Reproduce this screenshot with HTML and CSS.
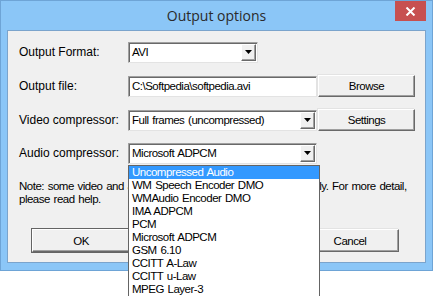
FILE: index.html
```html
<!DOCTYPE html>
<html lang="en">
<head>
    <meta charset="UTF-8">
    <title>Output options</title>
    <link rel="stylesheet" href="styles.css">
</head>
<body>
    <div class="window">
        <div class="titlebar">
            <span class="title">Output options</span>
            <span class="close">
                <svg width="11" height="9" viewBox="0 0 11 9"><path d="M1.5 0.5 L9.5 8.5 M9.5 0.5 L1.5 8.5" stroke="#fff" stroke-width="2"/></svg>
            </span>
        </div>
        <div class="client">
            <div class="row">
                <label>Output Format:</label>
                <div class="combo short"><span class="value">AVI</span><span class="arrow"></span></div>
            </div>
            <div class="row">
                <label>Output file:</label>
                <div class="edit">C:\Softpedia\softpedia.avi</div>
                <button class="btn side">Browse</button>
            </div>
            <div class="row tight">
                <label>Video compressor:</label>
                <div class="combo"><span class="value">Full frames (uncompressed)</span><span class="arrow"></span></div>
                <button class="btn side">Settings</button>
            </div>
            <div class="row">
                <label>Audio compressor:</label>
                <div class="combo"><span class="value">Microsoft ADPCM</span><span class="arrow"></span></div>
            </div>
            <p class="note">Note: some video and audio compressors may not work properly. For more detail,<br>please read help.</p>
            <div class="actions">
                <button class="btn wide default">OK</button>
                <button class="btn wide">Cancel</button>
            </div>
        </div>
        <ul class="droplist">
            <li class="selected">Uncompressed Audio</li>
            <li>WM Speech Encoder DMO</li>
            <li>WMAudio Encoder DMO</li>
            <li>IMA ADPCM</li>
            <li>PCM</li>
            <li>Microsoft ADPCM</li>
            <li>GSM 6.10</li>
            <li>CCITT A-Law</li>
            <li>CCITT u-Law</li>
            <li>MPEG Layer-3</li>
        </ul>
    </div>
</body>
</html>
```

FILE: styles.css
```css
html, body {
    height: 296px;
}
body {
    margin: 0;
    background: #fff;
    font-family: 'Liberation Sans', Arial, sans-serif;
    font-size: 12px;
    color: #000;
}
.window {
    position: relative;
    width: 433px;
    height: 271px;
    box-sizing: border-box;
    background: #8bc6f7;
    border: 1px solid #6ea4d6;
    padding: 0 6px 7px 6px;
}
.titlebar {
    height: 29px;
    display: flex;
    justify-content: center;
    align-items: center;
}
.title {
    font-family: 'Open Sans', 'Noto Sans', sans-serif;
    font-size: 14px;
    color: #2a2a2a;
    margin-top: -1px;
}
.close {
    position: absolute;
    top: 0;
    right: 6px;
    width: 31px;
    height: 20px;
    background: #c75050;
    display: flex;
    justify-content: center;
    align-items: center;
}
.client {
    height: 233px;
    box-sizing: border-box;
    background: #f0f0f0;
    border: 1px solid #7ba4cc;
    padding: 10px 10px 0 11px;
    overflow: hidden;
}
.row {
    display: flex;
    align-items: center;
    height: 22px;
    margin-bottom: 12px;
}
.row.tight {
    margin-bottom: 11px;
}
.row label {
    width: 109px;
}
.combo, .edit, .btn, .note, .droplist {
    font-size: 11.5px;
    letter-spacing: -0.5px;
    word-spacing: 1px;
}
.combo, .edit {
    height: 21px;
    box-sizing: border-box;
    background: #fff;
    border: 1px solid;
    border-color: #a0a0a0 #e3e3e3 #e3e3e3 #a0a0a0;
    box-shadow: inset 1px 1px 0 #696969;
    display: flex;
    align-items: center;
    padding-left: 3px;
    width: 189px;
    white-space: nowrap;
}
.combo.short {
    width: 130px;
}
.combo .value {
    flex: 1;
}
.arrow {
    width: 15px;
    height: 17px;
    margin-right: 1px;
    box-sizing: border-box;
    background: #f0f0f0;
    border: 1px solid;
    border-color: #fff #696969 #696969 #fff;
    box-shadow: inset -1px -1px 0 #a0a0a0;
    display: flex;
    justify-content: center;
    align-items: center;
}
.arrow::after {
    content: '';
    width: 7px;
    height: 4px;
    background: #000;
    clip-path: polygon(0 0, 100% 0, 50% 100%);
}
.btn {
    font-family: inherit;
    color: #000;
    background: #f0f0f0;
    border: 1px solid;
    border-color: #fff #696969 #696969 #fff;
    box-shadow: inset -1px -1px 0 #a0a0a0, -1px -1px 0 #e3e3e3;
    padding: 0;
}
.btn.side {
    width: 97px;
    height: 22px;
    margin-left: 1px;
}
.note {
    margin: 0;
    line-height: 13px;
    padding-top: 4px;
    white-space: nowrap;
}
.actions {
    display: flex;
    justify-content: space-between;
    padding: 0 16px 0 13px;
    margin-top: 23px;
}
.btn.wide {
    width: 98px;
    height: 23px;
}
.btn.default {
    outline: 1px solid #646464;
}
.droplist {
    position: absolute;
    left: 127px;
    top: 164px;
    width: 192px;
    margin: 0;
    padding: 0;
    list-style: none;
    background: #fff;
    border: 1px solid #646464;
    box-sizing: border-box;
}
.droplist li {
    height: 13px;
    line-height: 13px;
    padding-left: 3px;
}
.droplist li.selected {
    background: #3399ff;
    color: #fff;
}
```
